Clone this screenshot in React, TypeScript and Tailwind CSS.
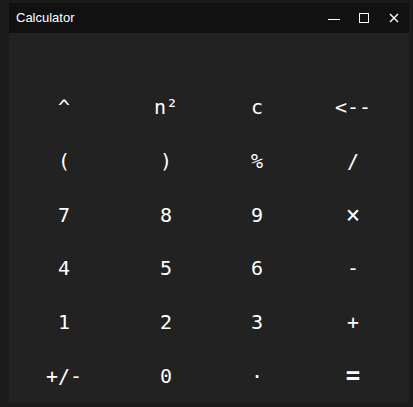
import React from 'react';

const keys = [
  ['^', 'n²', 'c', '<--'],
  ['(', ')', '%', '/'],
  ['7', '8', '9', '×'],
  ['4', '5', '6', '-'],
  ['1', '2', '3', '+'],
  ['+/-', '0', '·', '='],
];

export default function App() {
  return (
    <div className="h-[407px] w-[413px] bg-[#1b1b1b] pl-[9px] pt-[3px]">
      <div className="flex h-[400px] w-[400px] flex-col bg-[#222222]">
        <div className="flex h-[30px] items-center justify-between bg-[#111111] pl-[7px] pr-[8px]">
          <span className="text-[13px] text-white font-['Liberation_Sans',sans-serif]">Calculator</span>
          <div className="flex items-center gap-[16px]">
            <svg width="14" height="14" viewBox="0 0 14 14">
              <line x1="1" y1="8.5" x2="13" y2="8.5" stroke="#fff" strokeWidth="1" />
            </svg>
            <svg width="14" height="14" viewBox="0 0 14 14">
              <rect x="2.5" y="2.5" width="9" height="9" fill="none" stroke="#fff" strokeWidth="1" />
            </svg>
            <svg width="14" height="14" viewBox="0 0 14 14">
              <path d="M3 3 L11 11 M11 3 L3 11" stroke="#fff" strokeWidth="1.4" />
            </svg>
          </div>
        </div>
        <div className="h-[47px]" />
        <div className="grid flex-1 grid-cols-[110px_94px_88px_104px] grid-rows-6 font-['DejaVu_Sans_Mono',monospace] text-[20px] text-white">
          {keys.flat().map((k, i) => (
            <button
              key={i}
              className={
                k === '='
                  ? 'flex items-center justify-center text-[24px] font-bold'
                  : k === '×'
                    ? 'flex items-center justify-center text-[24px]'
                    : 'flex items-center justify-center'
              }
            >
              {k}
            </button>
          ))}
        </div>
      </div>
    </div>
  );
}
